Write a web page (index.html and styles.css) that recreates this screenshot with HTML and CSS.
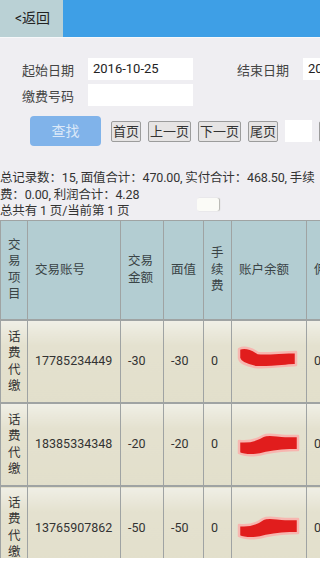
FILE: index.html
```html
<!DOCTYPE html>
<html lang="zh-CN">
  <head>
    <meta charset="UTF-8" />
    <meta name="viewport" content="width=device-width, initial-scale=1.0" />
    <title>交易查询</title>
    <link rel="stylesheet" href="styles.css">
  </head>
  <body>
    <div class="page">
      <!-- top bar -->
      <div class="topbar">
        <div class="back">&lt;返回</div>
        <div class="bar-fill"></div>
      </div>

      <!-- search form -->
      <div class="form">
        <div class="row">
          <span class="label">起始日期</span>
          <div class="input">2016-10-25</div>
          <span class="label end">结束日期</span>
          <div class="input">2016-10-25</div>
        </div>
        <div class="row">
          <span class="label">缴费号码</span>
          <div class="input"></div>
        </div>
        <div class="tools">
          <div class="btn-search">查找</div>
          <div class="pbtn">首页</div>
          <div class="pbtn">上一页</div>
          <div class="pbtn">下一页</div>
          <div class="pbtn">尾页</div>
          <div class="jump-input"></div>
          <div class="pbtn">跳转</div>
        </div>
      </div>

      <!-- summary -->
      <div class="summary">
        总记录数：15, 面值合计：470.00, 实付合计：468.50, 手续费：0.00, 利润合计：4.28<span class="mini-box"></span><br>
        总共有 1 页/当前第 1 页
      </div>
    </div>

    <!-- records -->
    <div class="table-wrap">
      <table class="list">
        <colgroup>
          <col class="c1">
          <col class="c2">
          <col class="c3">
          <col class="c4">
          <col class="c5">
          <col class="c6">
          <col class="c7">
        </colgroup>
        <tr class="head">
          <th>交易项目</th>
          <th>交易账号</th>
          <th>交易金额</th>
          <th>面值</th>
          <th>手续费</th>
          <th>账户余额</th>
          <th>佣金</th>
        </tr>
        <tr>
          <td>话费代缴</td>
          <td>17785234449</td>
          <td>-30</td>
          <td>-30</td>
          <td>0</td>
          <td>
            <svg class="mark up" width="64" height="24" viewBox="0 0 64 24">
              <path d="M3 3 C 9 0, 16 3, 22 7 C 32 8, 46 6, 60 6 L 60 19 C 46 20, 31 22, 19 21 C 10 19, 4 17, 3 12 Z" fill="#e11d1d" stroke="#f7b6b0" stroke-width="2.5" stroke-linejoin="round" />
            </svg>
          </td>
          <td>0.28</td>
        </tr>
        <tr>
          <td>话费代缴</td>
          <td>18385334348</td>
          <td>-20</td>
          <td>-20</td>
          <td>0</td>
          <td>
            <span class="ghost">388</span>
            <svg class="mark" width="64" height="24" viewBox="0 0 64 24">
              <path d="M3 8 C 11 9, 19 8, 27 3 C 33 0, 41 3, 49 3 L 62 3 L 62 17 C 50 17, 40 18, 30 20 C 20 23, 9 23, 3 20 Z" fill="#e11d1d" stroke="#f7b6b0" stroke-width="2.5" stroke-linejoin="round" />
            </svg>
          </td>
          <td>0.19</td>
        </tr>
        <tr>
          <td>话费代缴</td>
          <td>13765907862</td>
          <td>-50</td>
          <td>-50</td>
          <td>0</td>
          <td>
            <span class="ghost">388</span>
            <svg class="mark" width="64" height="24" viewBox="0 0 64 24">
              <path d="M3 9 C 11 10, 19 9, 27 3 C 33 0, 41 3, 49 3 L 62 3 L 62 17 C 50 17, 40 18, 30 20 C 20 23, 9 23, 3 20 Z" fill="#e11d1d" stroke="#f7b6b0" stroke-width="2.5" stroke-linejoin="round" />
            </svg>
          </td>
          <td>0.47</td>
        </tr>
      </table>
    </div>
  </body>
</html>
```

FILE: styles.css
```css
* {
  margin: 0;
  padding: 0;
  box-sizing: border-box;
}
html,
body {
  width: 320px;
  overflow: hidden;
}
body {
  background-color: #fff;
  font-family: Roboto, "Noto Sans CJK SC", sans-serif;
  color: #333;
}
.page {
  background-color: #efeef2;
  overflow: hidden;
}

/* top bar */
.topbar {
  display: flex;
  height: 38px;
  border-bottom: 1px solid #f7f8fa;
}
.back {
  width: 63px;
  background-color: #bad1d5;
  font-size: 14px;
  line-height: 37px;
  padding-left: 15px;
  color: #222;
}
.bar-fill {
  flex: 1;
  background-color: #3e9fe6;
}

/* form */
.form {
  padding: 20px 0 0 22px;
}
.row {
  display: flex;
  align-items: center;
  height: 22px;
  margin-bottom: 4px;
  white-space: nowrap;
}
.label {
  flex: none;
  width: 66px;
  font-size: 13px;
  color: #444;
}
.label.end {
  margin-left: 44px;
}
.input {
  flex: none;
  width: 105px;
  height: 22px;
  background-color: #fff;
  padding-left: 5px;
  font-size: 13px;
  line-height: 22px;
  color: #222;
}
.tools {
  display: flex;
  align-items: center;
  gap: 7px;
  height: 30px;
  margin: 10px 0 0 8px;
  white-space: nowrap;
}
.btn-search {
  flex: none;
  width: 71px;
  height: 30px;
  margin-right: 3px;
  border-radius: 4px;
  background-color: #80b3ea;
  color: #dbe8f8;
  font-size: 14px;
  line-height: 30px;
  text-align: center;
}
.pbtn {
  flex: none;
  height: 21px;
  padding: 0 1px;
  border: 1px solid #9c9c9c;
  border-radius: 2px;
  background-color: #e6e4e4;
  font-size: 13px;
  line-height: 19px;
  color: #333;
}
.jump-input {
  flex: none;
  width: 27px;
  height: 22px;
  background-color: #fff;
}

/* summary */
.summary {
  margin-top: 24px;
  font-size: 12.5px;
  letter-spacing: -0.15px;
  line-height: 16.5px;
  color: #333;
}
.mini-box {
  display: inline-block;
  width: 22px;
  height: 13px;
  margin: 0 0 -12px 58px;
  border-radius: 2px;
  background-color: #fbfbf7;
  box-shadow: 1px 0 1px #b5b5b0;
}

/* table */
.table-wrap {
  height: 338px;
  overflow: hidden;
}
.list {
  width: 367px;
  table-layout: fixed;
  border-collapse: collapse;
  font-size: 12.5px;
  color: #333;
}
.c1 { width: 27px; }
.c2 { width: 93px; }
.c3 { width: 43px; }
.c4 { width: 40px; }
.c5 { width: 28px; }
.c6 { width: 75px; }
.c7 { width: 61px; }
.list th,
.list td {
  border: 1px solid #9fa3a3;
  padding: 0 7px;
  text-align: left;
  vertical-align: middle;
  font-weight: normal;
  line-height: 16.5px;
}
.head th {
  height: 100px;
  background-color: #b3cdd2;
  color: #3a4446;
}
.list td {
  height: 83px;
  background: linear-gradient(#f0efe6, #e4e1cf 30%, #e2dfcb);
  border-top-width: 2px;
}
.mark {
  display: block;
  margin: 0 0 0 -3px;
}
.mark.up {
  margin-top: -8px;
}
.ghost {
  display: block;
  height: 0;
  padding-left: 36px;
  color: #9a9a90;
  line-height: 28px;
}
```
